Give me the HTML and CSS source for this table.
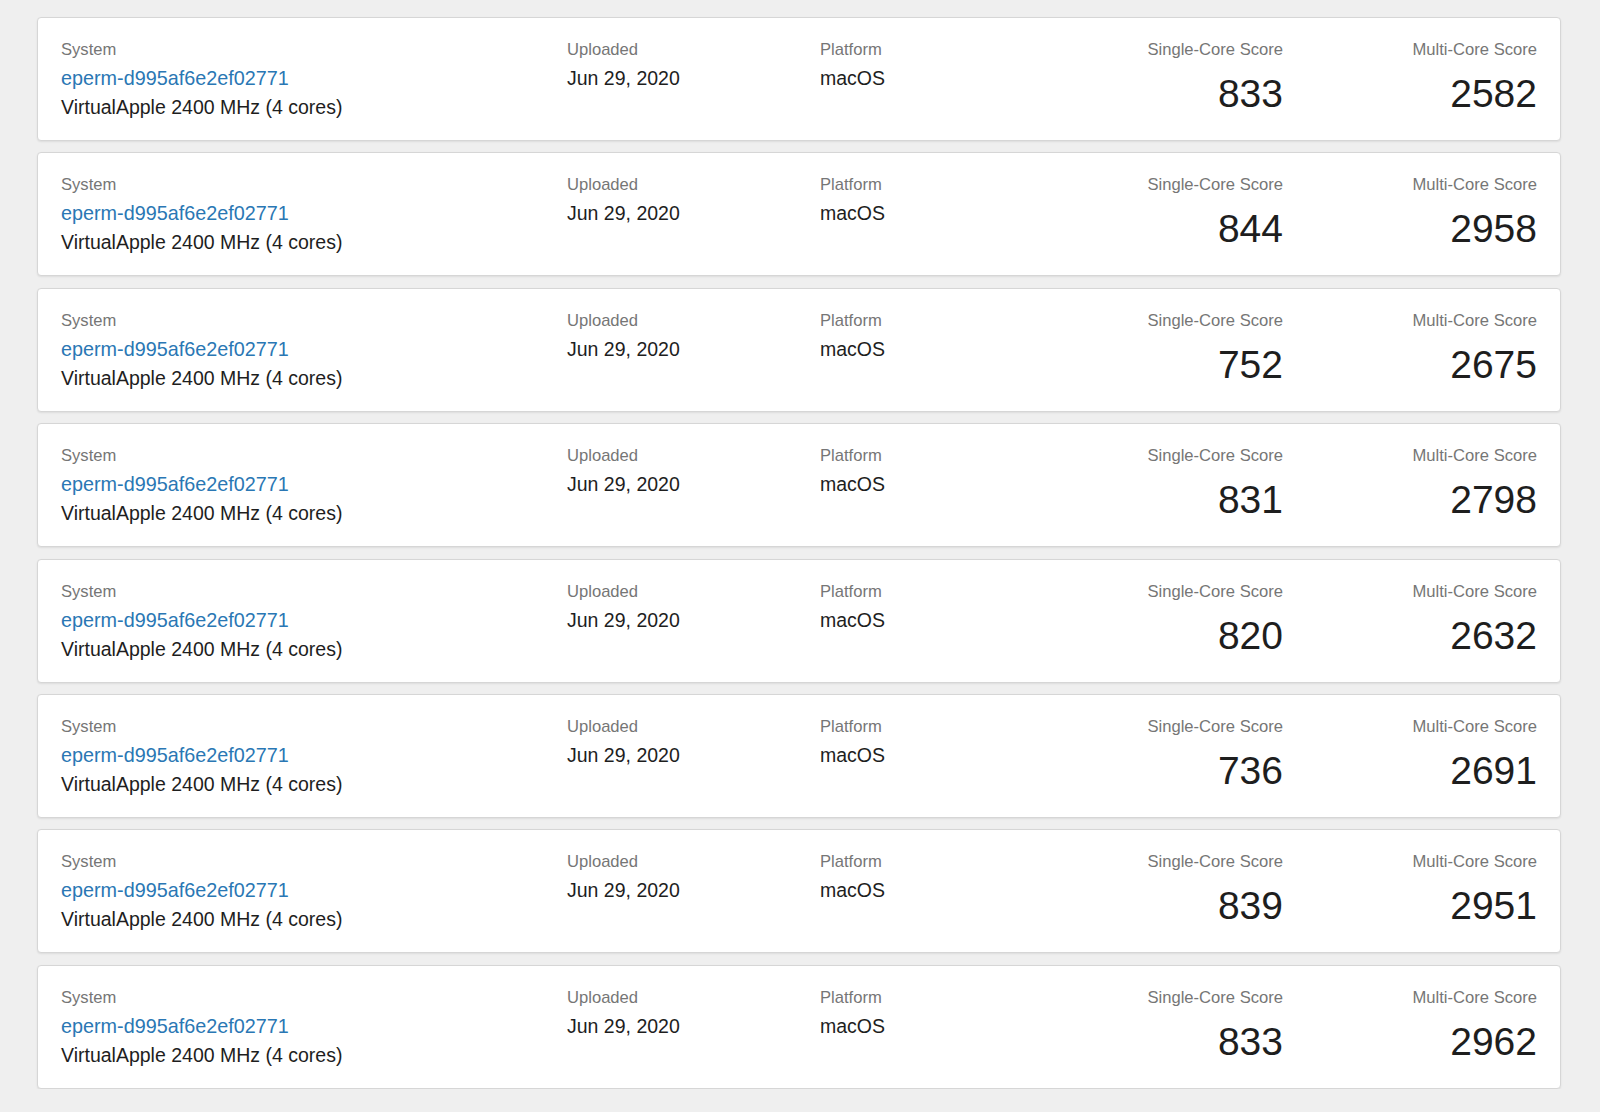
FILE: index.html
```html
<!DOCTYPE html>
<html>
<head>
<meta charset="utf-8">
<link rel="stylesheet" href="styles.css">
</head>
<body>
<div class="list">
  <div class="card">
    <div class="col"><div class="label">System</div><a class="link" href="#">eperm-d995af6e2ef02771</a><div class="value">VirtualApple 2400 MHz (4 cores)</div></div>
    <div class="col"><div class="label">Uploaded</div><div class="value">Jun 29, 2020</div></div>
    <div class="col"><div class="label">Platform</div><div class="value">macOS</div></div>
    <div class="col score"><div class="label">Single-Core Score</div><div class="num">833</div></div>
    <div class="col score"><div class="label">Multi-Core Score</div><div class="num">2582</div></div>
  </div>
  <div class="card">
    <div class="col"><div class="label">System</div><a class="link" href="#">eperm-d995af6e2ef02771</a><div class="value">VirtualApple 2400 MHz (4 cores)</div></div>
    <div class="col"><div class="label">Uploaded</div><div class="value">Jun 29, 2020</div></div>
    <div class="col"><div class="label">Platform</div><div class="value">macOS</div></div>
    <div class="col score"><div class="label">Single-Core Score</div><div class="num">844</div></div>
    <div class="col score"><div class="label">Multi-Core Score</div><div class="num">2958</div></div>
  </div>
  <div class="card">
    <div class="col"><div class="label">System</div><a class="link" href="#">eperm-d995af6e2ef02771</a><div class="value">VirtualApple 2400 MHz (4 cores)</div></div>
    <div class="col"><div class="label">Uploaded</div><div class="value">Jun 29, 2020</div></div>
    <div class="col"><div class="label">Platform</div><div class="value">macOS</div></div>
    <div class="col score"><div class="label">Single-Core Score</div><div class="num">752</div></div>
    <div class="col score"><div class="label">Multi-Core Score</div><div class="num">2675</div></div>
  </div>
  <div class="card">
    <div class="col"><div class="label">System</div><a class="link" href="#">eperm-d995af6e2ef02771</a><div class="value">VirtualApple 2400 MHz (4 cores)</div></div>
    <div class="col"><div class="label">Uploaded</div><div class="value">Jun 29, 2020</div></div>
    <div class="col"><div class="label">Platform</div><div class="value">macOS</div></div>
    <div class="col score"><div class="label">Single-Core Score</div><div class="num">831</div></div>
    <div class="col score"><div class="label">Multi-Core Score</div><div class="num">2798</div></div>
  </div>
  <div class="card">
    <div class="col"><div class="label">System</div><a class="link" href="#">eperm-d995af6e2ef02771</a><div class="value">VirtualApple 2400 MHz (4 cores)</div></div>
    <div class="col"><div class="label">Uploaded</div><div class="value">Jun 29, 2020</div></div>
    <div class="col"><div class="label">Platform</div><div class="value">macOS</div></div>
    <div class="col score"><div class="label">Single-Core Score</div><div class="num">820</div></div>
    <div class="col score"><div class="label">Multi-Core Score</div><div class="num">2632</div></div>
  </div>
  <div class="card">
    <div class="col"><div class="label">System</div><a class="link" href="#">eperm-d995af6e2ef02771</a><div class="value">VirtualApple 2400 MHz (4 cores)</div></div>
    <div class="col"><div class="label">Uploaded</div><div class="value">Jun 29, 2020</div></div>
    <div class="col"><div class="label">Platform</div><div class="value">macOS</div></div>
    <div class="col score"><div class="label">Single-Core Score</div><div class="num">736</div></div>
    <div class="col score"><div class="label">Multi-Core Score</div><div class="num">2691</div></div>
  </div>
  <div class="card">
    <div class="col"><div class="label">System</div><a class="link" href="#">eperm-d995af6e2ef02771</a><div class="value">VirtualApple 2400 MHz (4 cores)</div></div>
    <div class="col"><div class="label">Uploaded</div><div class="value">Jun 29, 2020</div></div>
    <div class="col"><div class="label">Platform</div><div class="value">macOS</div></div>
    <div class="col score"><div class="label">Single-Core Score</div><div class="num">839</div></div>
    <div class="col score"><div class="label">Multi-Core Score</div><div class="num">2951</div></div>
  </div>
  <div class="card">
    <div class="col"><div class="label">System</div><a class="link" href="#">eperm-d995af6e2ef02771</a><div class="value">VirtualApple 2400 MHz (4 cores)</div></div>
    <div class="col"><div class="label">Uploaded</div><div class="value">Jun 29, 2020</div></div>
    <div class="col"><div class="label">Platform</div><div class="value">macOS</div></div>
    <div class="col score"><div class="label">Single-Core Score</div><div class="num">833</div></div>
    <div class="col score"><div class="label">Multi-Core Score</div><div class="num">2962</div></div>
  </div>
</div>
</body>
</html>
```

FILE: styles.css
```css
html, body {
  margin: 0;
  padding: 0;
  background: #efefef;
  font-family: "Liberation Sans", Arial, Helvetica, sans-serif;
  color: #1e1e1e;
}

.list {
  display: flex;
  flex-direction: column;
  gap: 11.4px;
  padding: 17px 0 0 37px;
  width: 1524px;
}

.card {
  background: #ffffff;
  border: 1px solid #d6d6d6;
  border-radius: 4px;
  box-shadow: 0 1px 2px rgba(0, 0, 0, 0.08);
  padding: 20px 23px 18px 23px;
  display: grid;
  grid-template-columns: 506px 253px 1fr 200px 254px;
}

.col {
  display: flex;
  flex-direction: column;
  align-items: flex-start;
}

.col.score {
  align-items: flex-end;
  text-align: right;
}

.label {
  font-size: 16.6px;
  line-height: 24px;
  color: #767676;
  margin-bottom: 2px;
}

.link {
  font-size: 19.8px;
  line-height: 29px;
  color: #2a77b4;
  text-decoration: none;
}

.value {
  font-size: 19.5px;
  line-height: 29px;
  color: #1e1e1e;
}

.num {
  font-size: 39px;
  line-height: 45px;
  margin-top: 7px;
  color: #1e1e1e;
}
```
